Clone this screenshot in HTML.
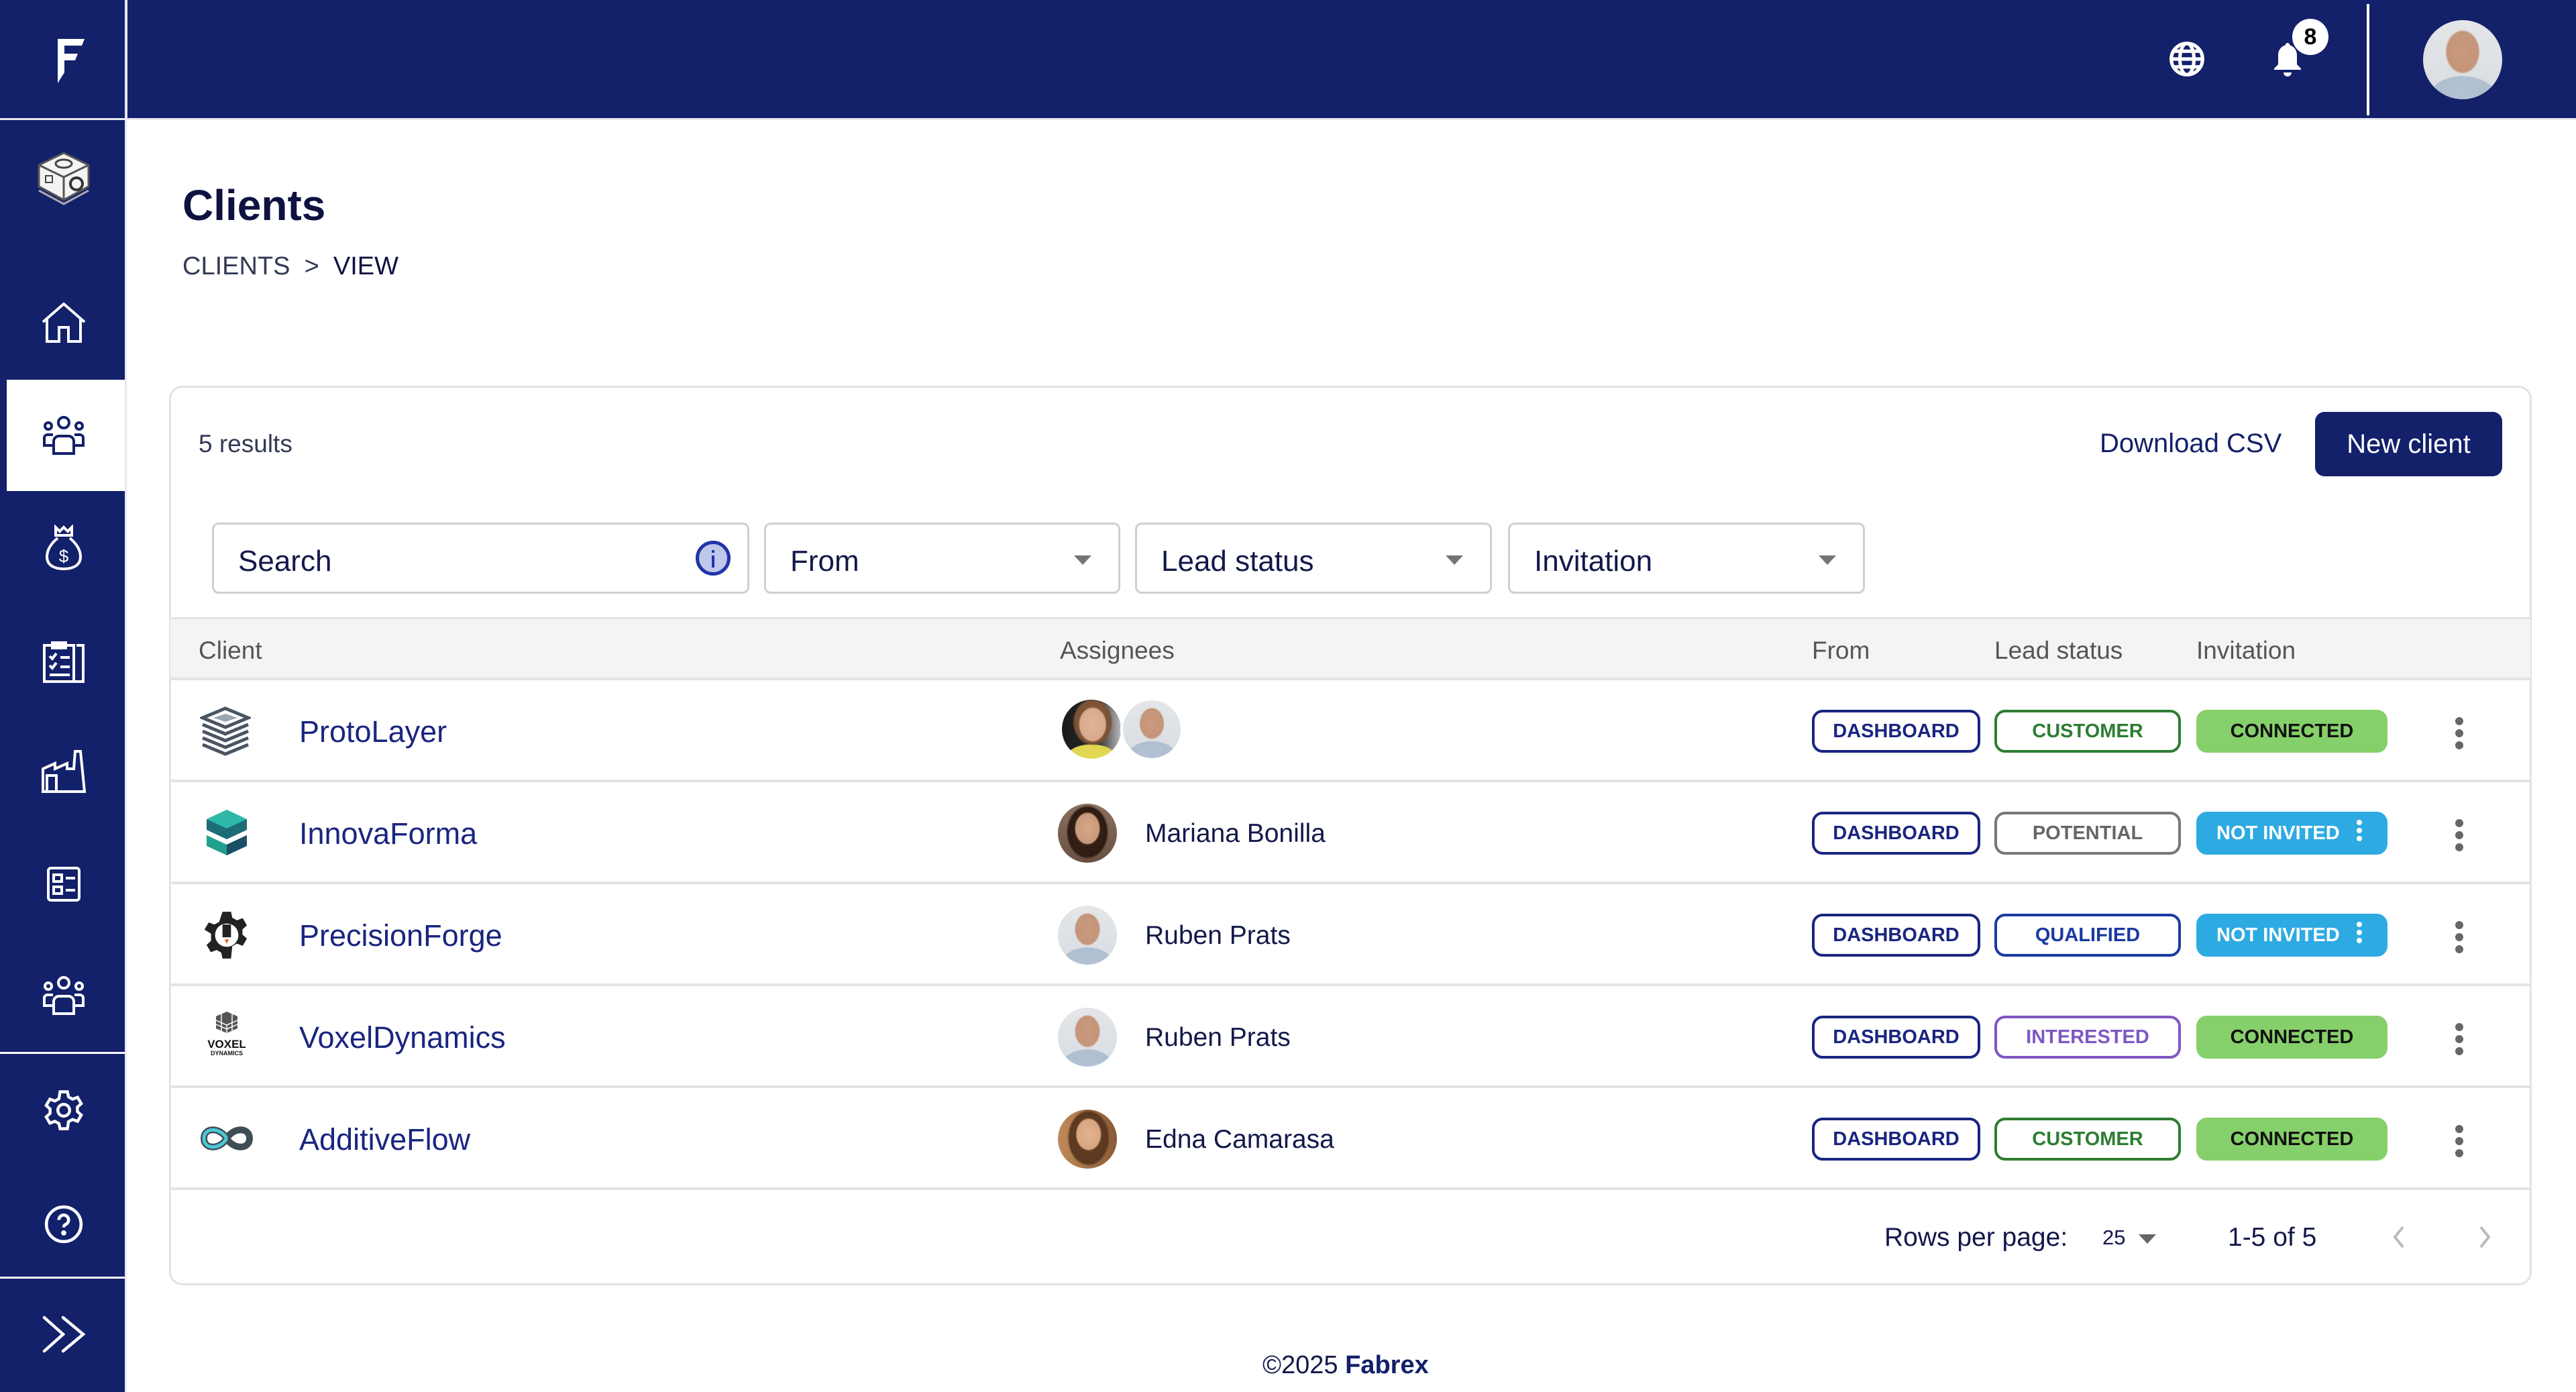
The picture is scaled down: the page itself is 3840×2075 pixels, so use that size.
<!DOCTYPE html>
<html><head><meta charset="utf-8">
<style>
*{margin:0;padding:0;box-sizing:border-box}
body{width:3840px;height:2075px;background:#fff;font-family:"Liberation Sans",sans-serif;position:relative;overflow:hidden;color:#13184a}
.abs{position:absolute}
.nav{background:#13206a}
.t{position:absolute;white-space:nowrap;line-height:1}
.chip{position:absolute;height:64px;border-radius:16px;border:4px solid;font-weight:bold;font-size:29px;display:flex;align-items:center;justify-content:center;letter-spacing:0px}
.row{position:absolute;left:252px;width:3522px;height:152px;border-bottom:4px solid #e3e3e3}
.sel{position:absolute;top:779px;height:106px;border:3px solid #cfcfcf;border-radius:10px;font-size:44px;color:#13184a}
.sel span{position:absolute;left:36px;top:30px}
.sel i{position:absolute;right:40px;top:46px;width:0;height:0;border-left:13px solid transparent;border-right:13px solid transparent;border-top:14px solid #757575}
.av{position:absolute;width:88px;height:88px;border-radius:50%;overflow:hidden}
.man{background:radial-gradient(ellipse 22% 28% at 50% 40%,#c99a7c 0,#c4957a 90%,transparent 100%),radial-gradient(ellipse 45% 30% at 50% 100%,#b4c3d4 0,#aebfd0 95%,transparent 100%),linear-gradient(#e4e6e8,#d8dde2)}
.kb{position:absolute;width:12px}
.kb b{display:block;width:12px;height:12px;border-radius:50%;background:#666;margin-bottom:6px}
</style></head><body>
<!-- top bar -->
<div class="abs nav" style="left:0;top:0;width:3840px;height:176px"></div>
<div class="abs" style="left:186px;top:0;width:4px;height:176px;background:#e8e8f0"></div>
<div class="abs" style="left:0;top:176px;width:3840px;height:3px;background:#e8e8f0"></div>
<div class="abs" style="left:3528px;top:6px;width:4px;height:166px;background:#fff"></div>
<svg class="abs" style="left:86px;top:58px" width="40" height="66" viewBox="0 0 40 66"><path d="M0 0H40L36 10H10V22H30L26 32H10V50L0 66Z" fill="#fff"/></svg>
<svg class="abs" style="left:3232px;top:60px" width="56" height="56" viewBox="0 0 24 24" fill="none" stroke="#fff" stroke-width="2.2"><circle cx="12" cy="12" r="10"/><ellipse cx="12" cy="12" rx="4.5" ry="10"/><path d="M2 12h20M3.5 7h17M3.5 17h17"/></svg>
<svg class="abs" style="left:3388px;top:60px" width="44" height="56" viewBox="0 0 22 28"><path d="M11 2c1 0 1.6.8 1.6 1.6C16 4.6 18 7.6 18 11v7l3 3v1H1v-1l3-3v-7c0-3.4 2-6.4 5.4-7.4C9.4 2.8 10 2 11 2z" fill="#fff"/><path d="M8 24h6a3 3 0 0 1-6 0z" fill="#fff"/></svg>
<div class="abs" style="left:3417px;top:28px;width:54px;height:54px;border-radius:50%;background:#fff;color:#000;font-weight:bold;font-size:34px;text-align:center;line-height:54px">8</div>
<div class="abs man" style="left:3612px;top:30px;width:118px;height:118px;border-radius:50%"></div>
<!-- sidebar -->
<div class="abs nav" style="left:0;top:179px;width:186px;height:1896px"></div>
<div class="abs" style="left:186px;top:179px;width:3px;height:1896px;background:#e8e8f0"></div>
<div class="abs" style="left:10px;top:566px;width:176px;height:166px;background:#fff"></div>
<div class="abs" style="left:0;top:1568px;width:186px;height:3px;background:#fff"></div>
<div class="abs" style="left:0;top:1903px;width:186px;height:3px;background:#fff"></div>
<svg class="abs" style="left:54px;top:222px" width="82" height="84" viewBox="0 0 82 84"><path d="M41 6L78 24V56L41 76L4 56V24Z" fill="#f4f4f4" stroke="#555" stroke-width="3"/><path d="M4 24L41 42L78 24M41 42V76" stroke="#555" stroke-width="3" fill="none"/><ellipse cx="41" cy="22" rx="12" ry="6" fill="none" stroke="#444" stroke-width="3"/><circle cx="60" cy="52" r="9" fill="none" stroke="#333" stroke-width="4"/><rect x="14" y="40" width="10" height="10" fill="none" stroke="#444" stroke-width="2"/><path d="M4 62L41 82L78 62" stroke="#aaa" stroke-width="3" fill="none"/></svg>
<svg class="abs" style="left:62px;top:450px" width="66" height="62" viewBox="0 0 66 62" fill="none" stroke="#fff" stroke-width="4"><path d="M2 30L33 3L64 30M8 25V59H26V38H40V59H58V25"/></svg>
<svg class="abs" style="left:62px;top:620px" width="66" height="58" viewBox="0 0 66 58" fill="none" stroke="#13206a" stroke-width="4"><circle cx="33" cy="10" r="8"/><circle cx="10" cy="15" r="5"/><circle cx="56" cy="15" r="5"/><path d="M18 56V38a8 8 0 0 1 8-8h14a8 8 0 0 1 8 8v18zM18 44H4V32a5 5 0 0 1 5-4h8M48 44h14V32a5 5 0 0 0-5-4h-8"/></svg>
<svg class="abs" style="left:66px;top:782px" width="58" height="68" viewBox="0 0 58 68" fill="none" stroke="#fff" stroke-width="4"><path d="M17 4l6 6 6-6 6 6 6-6v12H17zM17 16h24M20 20C8 30 4 40 4 48c0 12 10 18 25 18s25-6 25-18c0-8-4-18-16-28"/><text x="29" y="56" font-size="26" fill="#fff" stroke="none" text-anchor="middle" font-family="Liberation Sans">$</text></svg>
<svg class="abs" style="left:62px;top:952px" width="66" height="66" viewBox="0 0 66 66" fill="none" stroke="#fff" stroke-width="4"><rect x="4" y="10" width="44" height="54"/><path d="M16 6h20v8H16zM52 10h10v54H48M12 26l4 4 6-8M28 28h14M12 40l4 4 6-8M28 42h14M12 54h30"/></svg>
<svg class="abs" style="left:62px;top:1116px" width="66" height="66" viewBox="0 0 66 66" fill="none" stroke="#fff" stroke-width="4"><path d="M2 64V30l18-8v8l18-8v8h10L50 4h8l6 60zM8 64V40h14v24"/></svg>
<svg class="abs" style="left:70px;top:1292px" width="50" height="52" viewBox="0 0 50 52" fill="none" stroke="#fff" stroke-width="4"><rect x="2" y="2" width="46" height="48" rx="4"/><rect x="10" y="12" width="12" height="10"/><rect x="10" y="30" width="12" height="10"/><path d="M28 17h14M28 35h14"/></svg>
<svg class="abs" style="left:62px;top:1455px" width="66" height="58" viewBox="0 0 66 58" fill="none" stroke="#fff" stroke-width="4"><circle cx="33" cy="10" r="8"/><circle cx="10" cy="15" r="5"/><circle cx="56" cy="15" r="5"/><path d="M18 56V38a8 8 0 0 1 8-8h14a8 8 0 0 1 8 8v18zM18 44H4V32a5 5 0 0 1 5-4h8M48 44h14V32a5 5 0 0 0-5-4h-8"/></svg>
<svg class="abs" style="left:62px;top:1622px" width="66" height="66" viewBox="0 0 24 24" fill="none" stroke="#fff" stroke-width="1.6"><circle cx="12" cy="12" r="3.2"/><path d="M10 2h4l.6 2.8 2.2 1.2 2.7-1 2 3.4-2.1 1.9v2.4l2.1 1.9-2 3.4-2.7-1-2.2 1.2L14 22h-4l-.6-2.8-2.2-1.2-2.7 1-2-3.4 2.1-1.9V11.3L2.5 9.4l2-3.4 2.7 1 2.2-1.2z"/></svg>
<svg class="abs" style="left:64px;top:1794px" width="62" height="62" viewBox="0 0 24 24" fill="none" stroke="#fff" stroke-width="1.8"><circle cx="12" cy="12" r="10"/><path d="M9.2 9.5a2.8 2.8 0 1 1 4 2.5c-.8.4-1.2 1-1.2 1.8"/><circle cx="12" cy="17" r=".6" fill="#fff"/></svg>
<svg class="abs" style="left:62px;top:1958px" width="66" height="62" viewBox="0 0 66 62" fill="none" stroke="#fff" stroke-width="4.5" stroke-linecap="round"><path d="M4 6l28 25L4 56M32 6l30 25L32 56"/></svg>

<div class="t" style="left:272px;top:274px;font-size:64px;font-weight:bold;color:#0d1240">Clients</div>
<div class="t" style="left:272px;top:378px;font-size:38px;color:#333a55">CLIENTS&nbsp;&nbsp;&gt;&nbsp;&nbsp;<span style="color:#0d1240">VIEW</span></div>

<div class="abs" style="left:252px;top:575px;width:3522px;height:1341px;border:3px solid #e3e3e3;border-radius:20px"></div>
<div class="t" style="left:296px;top:643px;font-size:37px;color:#333a55">5 results</div>
<div class="t" style="left:3130px;top:641px;font-size:40px;color:#13206a">Download CSV</div>
<div class="abs" style="left:3451px;top:614px;width:279px;height:96px;background:#13206a;border-radius:14px;color:#fff;font-size:40px;text-align:center;line-height:96px">New client</div>

<div class="sel" style="left:316px;width:801px"><span>Search</span></div>
<div class="abs" style="left:1037px;top:806px;width:52px;height:52px;border-radius:50%;background:#bfc7ea;border:5px solid #2233aa"><div style="position:absolute;left:19px;top:9px;width:4px;height:4px;background:#2233aa"></div><div style="position:absolute;left:19px;top:17px;width:4px;height:18px;background:#2233aa"></div></div>
<div class="sel" style="left:1139px;width:531px"><span>From</span><i></i></div>
<div class="sel" style="left:1692px;width:532px"><span>Lead status</span><i></i></div>
<div class="sel" style="left:2248px;width:532px"><span>Invitation</span><i></i></div>

<div class="abs" style="left:254px;top:920px;width:3518px;height:94px;background:#f4f4f4;border-top:3px solid #e3e3e3;border-bottom:4px solid #e3e3e3"></div>
<div class="t" style="left:296px;top:951px;font-size:37px;color:#555">Client</div>
<div class="t" style="left:1580px;top:951px;font-size:37px;color:#555">Assignees</div>
<div class="t" style="left:2701px;top:951px;font-size:37px;color:#555">From</div>
<div class="t" style="left:2973px;top:951px;font-size:37px;color:#555">Lead status</div>
<div class="t" style="left:3274px;top:951px;font-size:37px;color:#555">Invitation</div>

<div class="row" style="top:1014px"></div>
<div class="row" style="top:1166px"></div>
<div class="row" style="top:1318px"></div>
<div class="row" style="top:1470px"></div>
<div class="row" style="top:1622px"></div>

<svg class="abs" style="left:298px;top:1050px" width="76" height="80" viewBox="0 0 76 80"><g fill="none" stroke="#4a5560" stroke-width="5"><path d="M38 6L72 20L38 34L4 20Z"/><path d="M4 30L38 44L72 30"/><path d="M4 40L38 54L72 40"/><path d="M4 50L38 64L72 50"/><path d="M4 60L38 74L72 60"/></g><path d="M38 14L56 20L38 26L20 20Z" fill="#9aa6ae"/></svg>
<svg class="abs" style="left:306px;top:1205px" width="64" height="72" viewBox="0 0 64 72"><path d="M32 2L62 16V32L32 46L2 32V16Z" fill="#2fb8a8"/><path d="M2 16L32 30L62 16V32L32 46L2 32Z" fill="#1d6d78"/><path d="M2 40L32 54L62 40V56L32 70L2 56Z" fill="#22a08f"/><path d="M32 54V70L62 56V40Z" fill="#1b4f66"/></svg>
<svg class="abs" style="left:300px;top:1356px" width="76" height="76" viewBox="0 0 24 24"><path d="M10 1h4l.6 2.8 2.2 1.2 2.7-1 2 3.4-2.1 1.9v2.4l2.1 1.9-2 3.4-2.7-1-2.2 1.2L14 23h-4l-.6-2.8-2.2-1.2-2.7 1-2-3.4 2.1-1.9V11.3L1.5 9.4l2-3.4 2.7 1 2.2-1.2z" fill="#222"/><circle cx="12" cy="12" r="5.5" fill="#fff"/><rect x="10" y="7" width="4" height="6" fill="#222"/><path d="M11 14h2l-1 2z" fill="#e85c20"/></svg>
<svg class="abs" style="left:302px;top:1506px" width="72" height="78" viewBox="0 0 72 78"><g fill="#555"><path d="M36 2L52 9V27L36 34L20 27V9Z"/></g><g stroke="#fff" stroke-width="1.5" fill="none"><path d="M20 15L36 22L52 15M20 21L36 28L52 21M28 5.5V30.5M44 5.5V30.5M36 22V34"/></g><text x="36" y="56" font-size="17" font-weight="bold" text-anchor="middle" font-family="Liberation Sans" fill="#111">VOXEL</text><text x="36" y="67" font-size="9" font-weight="bold" text-anchor="middle" font-family="Liberation Sans" fill="#111">DYNAMICS</text></svg>
<svg class="abs" style="left:298px;top:1672px" width="80" height="50" viewBox="0 0 80 50"><path d="M40 25C30 8 6 8 6 25s24 17 34 0 34-17 34 0-24 17-34 0z" fill="none" stroke="#3f4d55" stroke-width="10"/><path d="M40 25C30 8 6 8 6 25s24 17 34 0" fill="none" stroke="#4cc8d8" stroke-width="5"/></svg>

<div class="t" style="left:446px;top:1068px;font-size:45px;color:#1a2580">ProtoLayer</div>
<div class="t" style="left:446px;top:1220px;font-size:45px;color:#1a2580">InnovaForma</div>
<div class="t" style="left:446px;top:1372px;font-size:45px;color:#1a2580">PrecisionForge</div>
<div class="t" style="left:446px;top:1524px;font-size:45px;color:#1a2580">VoxelDynamics</div>
<div class="t" style="left:446px;top:1676px;font-size:45px;color:#1a2580">AdditiveFlow</div>

<div class="av" style="left:1583px;top:1043px;background:radial-gradient(ellipse 24% 30% at 52% 42%,#e0b59a 0,#d8a98c 90%,transparent 100%),radial-gradient(ellipse 34% 40% at 52% 38%,#8a5a36 0,#7a5236 90%,transparent 100%),radial-gradient(ellipse 45% 25% at 50% 100%,#e3da55 0,#e0d650 95%,transparent 100%),linear-gradient(90deg,#1a1a1a 0,#2a2a2a 60%,#bbb 100%)"></div>
<div class="av man" style="left:1670px;top:1040px;width:94px;height:94px;border:4px solid #fff"></div>
<div class="av" style="left:1577px;top:1198px;background:radial-gradient(ellipse 22% 28% at 50% 42%,#d6a888 0,#c9987a 90%,transparent 100%),radial-gradient(ellipse 36% 46% at 50% 48%,#3a2418 0,#2e1c14 90%,transparent 100%),linear-gradient(#8a7060,#6a5040)"></div>
<div class="av man" style="left:1577px;top:1350px"></div>
<div class="av man" style="left:1577px;top:1502px"></div>
<div class="av" style="left:1577px;top:1654px;background:radial-gradient(ellipse 22% 28% at 52% 42%,#e2b48e 0,#d8a680 90%,transparent 100%),radial-gradient(ellipse 36% 48% at 52% 48%,#6a4024 0,#5a3820 90%,transparent 100%),linear-gradient(90deg,#c08a5a,#8a5a36)"></div>
<div class="t" style="left:1707px;top:1223px;font-size:39px;color:#13184a">Mariana Bonilla</div>
<div class="t" style="left:1707px;top:1375px;font-size:39px;color:#13184a">Ruben Prats</div>
<div class="t" style="left:1707px;top:1527px;font-size:39px;color:#13184a">Ruben Prats</div>
<div class="t" style="left:1707px;top:1679px;font-size:39px;color:#13184a">Edna Camarasa</div>

<div class="chip" style="left:2701px;top:1058px;width:251px;border-color:#1a2580;color:#1a2580">DASHBOARD</div>
<div class="chip" style="left:2973px;top:1058px;width:278px;border-color:#2e7d32;color:#2e7d32">CUSTOMER</div>
<div class="chip" style="left:3274px;top:1058px;width:285px;border-color:#86d06b;background:#86d06b;color:#111">CONNECTED</div>
<div class="chip" style="left:2701px;top:1210px;width:251px;border-color:#1a2580;color:#1a2580">DASHBOARD</div>
<div class="chip" style="left:2973px;top:1210px;width:278px;border-color:#777;color:#666">POTENTIAL</div>
<div class="chip" style="left:3274px;top:1210px;width:285px;border-color:#2eaae2;background:#2eaae2;color:#fff;justify-content:flex-start;padding-left:26px">NOT INVITED<span style="position:absolute;right:34px;top:8px;width:8px"><b style="display:block;width:8px;height:8px;border-radius:50%;background:#fff;margin-bottom:4px"></b><b style="display:block;width:8px;height:8px;border-radius:50%;background:#fff;margin-bottom:4px"></b><b style="display:block;width:8px;height:8px;border-radius:50%;background:#fff"></b></span></div>
<div class="chip" style="left:2701px;top:1362px;width:251px;border-color:#1a2580;color:#1a2580">DASHBOARD</div>
<div class="chip" style="left:2973px;top:1362px;width:278px;border-color:#1a3aa0;color:#1a3aa0">QUALIFIED</div>
<div class="chip" style="left:3274px;top:1362px;width:285px;border-color:#2eaae2;background:#2eaae2;color:#fff;justify-content:flex-start;padding-left:26px">NOT INVITED<span style="position:absolute;right:34px;top:8px;width:8px"><b style="display:block;width:8px;height:8px;border-radius:50%;background:#fff;margin-bottom:4px"></b><b style="display:block;width:8px;height:8px;border-radius:50%;background:#fff;margin-bottom:4px"></b><b style="display:block;width:8px;height:8px;border-radius:50%;background:#fff"></b></span></div>
<div class="chip" style="left:2701px;top:1514px;width:251px;border-color:#1a2580;color:#1a2580">DASHBOARD</div>
<div class="chip" style="left:2973px;top:1514px;width:278px;border-color:#7e57c2;color:#7e57c2">INTERESTED</div>
<div class="chip" style="left:3274px;top:1514px;width:285px;border-color:#86d06b;background:#86d06b;color:#111">CONNECTED</div>
<div class="chip" style="left:2701px;top:1666px;width:251px;border-color:#1a2580;color:#1a2580">DASHBOARD</div>
<div class="chip" style="left:2973px;top:1666px;width:278px;border-color:#2e7d32;color:#2e7d32">CUSTOMER</div>
<div class="chip" style="left:3274px;top:1666px;width:285px;border-color:#86d06b;background:#86d06b;color:#111">CONNECTED</div>

<div class="kb" style="left:3660px;top:1069px"><b></b><b></b><b></b></div>
<div class="kb" style="left:3660px;top:1221px"><b></b><b></b><b></b></div>
<div class="kb" style="left:3660px;top:1373px"><b></b><b></b><b></b></div>
<div class="kb" style="left:3660px;top:1525px"><b></b><b></b><b></b></div>
<div class="kb" style="left:3660px;top:1677px"><b></b><b></b><b></b></div>

<div class="t" style="left:2809px;top:1825px;font-size:39px;color:#13184a">Rows per page:</div>
<div class="t" style="left:3134px;top:1829px;font-size:31px;color:#13184a">25</div>
<div class="abs" style="left:3188px;top:1840px;width:0;height:0;border-left:13px solid transparent;border-right:13px solid transparent;border-top:14px solid #666"></div>
<div class="t" style="left:3321px;top:1825px;font-size:39px;color:#13184a">1-5 of 5</div>
<svg class="abs" style="left:3564px;top:1826px" width="24" height="36" viewBox="0 0 24 36" fill="none" stroke="#bbb" stroke-width="4"><path d="M18 3L6 18l12 15"/></svg>
<svg class="abs" style="left:3692px;top:1826px" width="24" height="36" viewBox="0 0 24 36" fill="none" stroke="#bbb" stroke-width="4"><path d="M6 3l12 15L6 33"/></svg>

<div class="t" style="left:1882px;top:2016px;font-size:38px;color:#13184a">©2025 <b style="color:#13206a">Fabrex</b></div>
</body></html>
